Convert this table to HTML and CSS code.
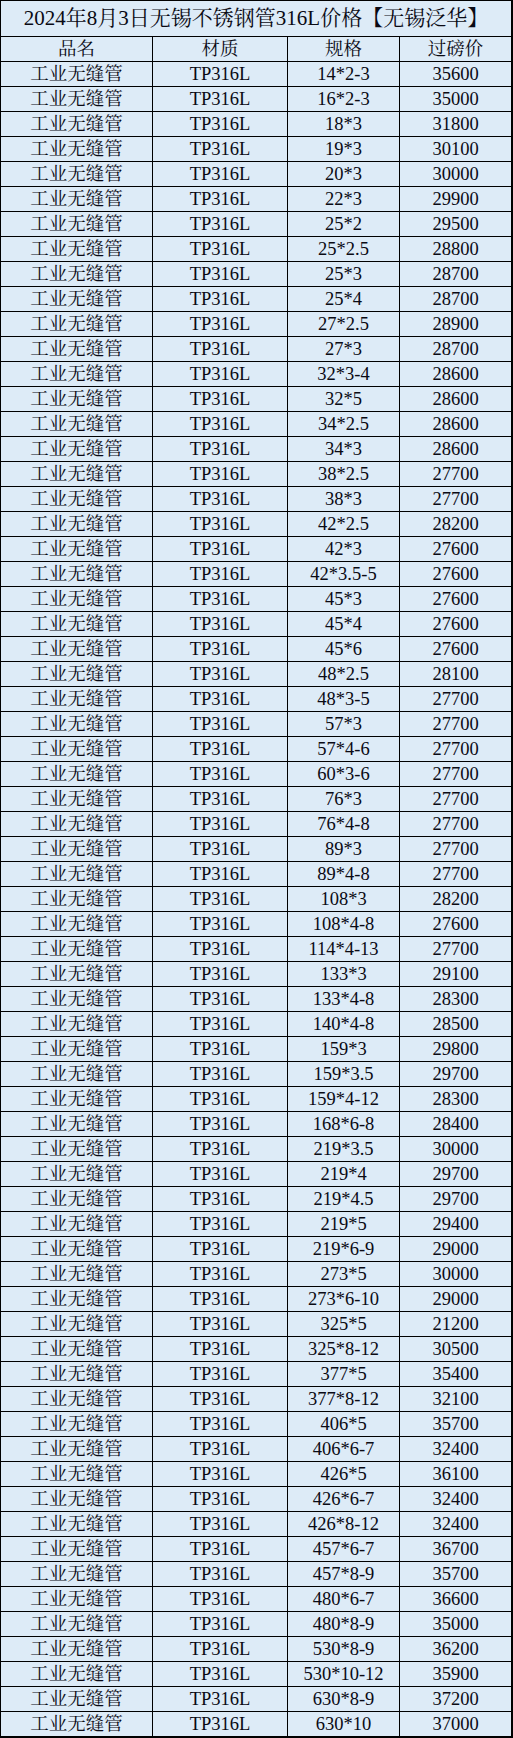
FILE: index.html
```html
<!DOCTYPE html>
<html lang="zh-CN">
<head>
<meta charset="utf-8">
<title>2024年8月3日无锡不锈钢管316L价格</title>
<link rel="stylesheet" href="styles.css">
</head>
<body>
<div class="sheet">
<div class="cell title">2024年8月3日无锡不锈钢管316L价格【无锡泛华】</div>
<div class="cell head">品名</div><div class="cell head">材质</div><div class="cell head">规格</div><div class="cell head">过磅价</div>
<div class="cell">工业无缝管</div><div class="cell">TP316L</div><div class="cell">14*2-3</div><div class="cell">35600</div>
<div class="cell">工业无缝管</div><div class="cell">TP316L</div><div class="cell">16*2-3</div><div class="cell">35000</div>
<div class="cell">工业无缝管</div><div class="cell">TP316L</div><div class="cell">18*3</div><div class="cell">31800</div>
<div class="cell">工业无缝管</div><div class="cell">TP316L</div><div class="cell">19*3</div><div class="cell">30100</div>
<div class="cell">工业无缝管</div><div class="cell">TP316L</div><div class="cell">20*3</div><div class="cell">30000</div>
<div class="cell">工业无缝管</div><div class="cell">TP316L</div><div class="cell">22*3</div><div class="cell">29900</div>
<div class="cell">工业无缝管</div><div class="cell">TP316L</div><div class="cell">25*2</div><div class="cell">29500</div>
<div class="cell">工业无缝管</div><div class="cell">TP316L</div><div class="cell">25*2.5</div><div class="cell">28800</div>
<div class="cell">工业无缝管</div><div class="cell">TP316L</div><div class="cell">25*3</div><div class="cell">28700</div>
<div class="cell">工业无缝管</div><div class="cell">TP316L</div><div class="cell">25*4</div><div class="cell">28700</div>
<div class="cell">工业无缝管</div><div class="cell">TP316L</div><div class="cell">27*2.5</div><div class="cell">28900</div>
<div class="cell">工业无缝管</div><div class="cell">TP316L</div><div class="cell">27*3</div><div class="cell">28700</div>
<div class="cell">工业无缝管</div><div class="cell">TP316L</div><div class="cell">32*3-4</div><div class="cell">28600</div>
<div class="cell">工业无缝管</div><div class="cell">TP316L</div><div class="cell">32*5</div><div class="cell">28600</div>
<div class="cell">工业无缝管</div><div class="cell">TP316L</div><div class="cell">34*2.5</div><div class="cell">28600</div>
<div class="cell">工业无缝管</div><div class="cell">TP316L</div><div class="cell">34*3</div><div class="cell">28600</div>
<div class="cell">工业无缝管</div><div class="cell">TP316L</div><div class="cell">38*2.5</div><div class="cell">27700</div>
<div class="cell">工业无缝管</div><div class="cell">TP316L</div><div class="cell">38*3</div><div class="cell">27700</div>
<div class="cell">工业无缝管</div><div class="cell">TP316L</div><div class="cell">42*2.5</div><div class="cell">28200</div>
<div class="cell">工业无缝管</div><div class="cell">TP316L</div><div class="cell">42*3</div><div class="cell">27600</div>
<div class="cell">工业无缝管</div><div class="cell">TP316L</div><div class="cell">42*3.5-5</div><div class="cell">27600</div>
<div class="cell">工业无缝管</div><div class="cell">TP316L</div><div class="cell">45*3</div><div class="cell">27600</div>
<div class="cell">工业无缝管</div><div class="cell">TP316L</div><div class="cell">45*4</div><div class="cell">27600</div>
<div class="cell">工业无缝管</div><div class="cell">TP316L</div><div class="cell">45*6</div><div class="cell">27600</div>
<div class="cell">工业无缝管</div><div class="cell">TP316L</div><div class="cell">48*2.5</div><div class="cell">28100</div>
<div class="cell">工业无缝管</div><div class="cell">TP316L</div><div class="cell">48*3-5</div><div class="cell">27700</div>
<div class="cell">工业无缝管</div><div class="cell">TP316L</div><div class="cell">57*3</div><div class="cell">27700</div>
<div class="cell">工业无缝管</div><div class="cell">TP316L</div><div class="cell">57*4-6</div><div class="cell">27700</div>
<div class="cell">工业无缝管</div><div class="cell">TP316L</div><div class="cell">60*3-6</div><div class="cell">27700</div>
<div class="cell">工业无缝管</div><div class="cell">TP316L</div><div class="cell">76*3</div><div class="cell">27700</div>
<div class="cell">工业无缝管</div><div class="cell">TP316L</div><div class="cell">76*4-8</div><div class="cell">27700</div>
<div class="cell">工业无缝管</div><div class="cell">TP316L</div><div class="cell">89*3</div><div class="cell">27700</div>
<div class="cell">工业无缝管</div><div class="cell">TP316L</div><div class="cell">89*4-8</div><div class="cell">27700</div>
<div class="cell">工业无缝管</div><div class="cell">TP316L</div><div class="cell">108*3</div><div class="cell">28200</div>
<div class="cell">工业无缝管</div><div class="cell">TP316L</div><div class="cell">108*4-8</div><div class="cell">27600</div>
<div class="cell">工业无缝管</div><div class="cell">TP316L</div><div class="cell">114*4-13</div><div class="cell">27700</div>
<div class="cell">工业无缝管</div><div class="cell">TP316L</div><div class="cell">133*3</div><div class="cell">29100</div>
<div class="cell">工业无缝管</div><div class="cell">TP316L</div><div class="cell">133*4-8</div><div class="cell">28300</div>
<div class="cell">工业无缝管</div><div class="cell">TP316L</div><div class="cell">140*4-8</div><div class="cell">28500</div>
<div class="cell">工业无缝管</div><div class="cell">TP316L</div><div class="cell">159*3</div><div class="cell">29800</div>
<div class="cell">工业无缝管</div><div class="cell">TP316L</div><div class="cell">159*3.5</div><div class="cell">29700</div>
<div class="cell">工业无缝管</div><div class="cell">TP316L</div><div class="cell">159*4-12</div><div class="cell">28300</div>
<div class="cell">工业无缝管</div><div class="cell">TP316L</div><div class="cell">168*6-8</div><div class="cell">28400</div>
<div class="cell">工业无缝管</div><div class="cell">TP316L</div><div class="cell">219*3.5</div><div class="cell">30000</div>
<div class="cell">工业无缝管</div><div class="cell">TP316L</div><div class="cell">219*4</div><div class="cell">29700</div>
<div class="cell">工业无缝管</div><div class="cell">TP316L</div><div class="cell">219*4.5</div><div class="cell">29700</div>
<div class="cell">工业无缝管</div><div class="cell">TP316L</div><div class="cell">219*5</div><div class="cell">29400</div>
<div class="cell">工业无缝管</div><div class="cell">TP316L</div><div class="cell">219*6-9</div><div class="cell">29000</div>
<div class="cell">工业无缝管</div><div class="cell">TP316L</div><div class="cell">273*5</div><div class="cell">30000</div>
<div class="cell">工业无缝管</div><div class="cell">TP316L</div><div class="cell">273*6-10</div><div class="cell">29000</div>
<div class="cell">工业无缝管</div><div class="cell">TP316L</div><div class="cell">325*5</div><div class="cell">21200</div>
<div class="cell">工业无缝管</div><div class="cell">TP316L</div><div class="cell">325*8-12</div><div class="cell">30500</div>
<div class="cell">工业无缝管</div><div class="cell">TP316L</div><div class="cell">377*5</div><div class="cell">35400</div>
<div class="cell">工业无缝管</div><div class="cell">TP316L</div><div class="cell">377*8-12</div><div class="cell">32100</div>
<div class="cell">工业无缝管</div><div class="cell">TP316L</div><div class="cell">406*5</div><div class="cell">35700</div>
<div class="cell">工业无缝管</div><div class="cell">TP316L</div><div class="cell">406*6-7</div><div class="cell">32400</div>
<div class="cell">工业无缝管</div><div class="cell">TP316L</div><div class="cell">426*5</div><div class="cell">36100</div>
<div class="cell">工业无缝管</div><div class="cell">TP316L</div><div class="cell">426*6-7</div><div class="cell">32400</div>
<div class="cell">工业无缝管</div><div class="cell">TP316L</div><div class="cell">426*8-12</div><div class="cell">32400</div>
<div class="cell">工业无缝管</div><div class="cell">TP316L</div><div class="cell">457*6-7</div><div class="cell">36700</div>
<div class="cell">工业无缝管</div><div class="cell">TP316L</div><div class="cell">457*8-9</div><div class="cell">35700</div>
<div class="cell">工业无缝管</div><div class="cell">TP316L</div><div class="cell">480*6-7</div><div class="cell">36600</div>
<div class="cell">工业无缝管</div><div class="cell">TP316L</div><div class="cell">480*8-9</div><div class="cell">35000</div>
<div class="cell">工业无缝管</div><div class="cell">TP316L</div><div class="cell">530*8-9</div><div class="cell">36200</div>
<div class="cell">工业无缝管</div><div class="cell">TP316L</div><div class="cell">530*10-12</div><div class="cell">35900</div>
<div class="cell">工业无缝管</div><div class="cell">TP316L</div><div class="cell">630*8-9</div><div class="cell">37200</div>
<div class="cell">工业无缝管</div><div class="cell">TP316L</div><div class="cell">630*10</div><div class="cell">37000</div>
</div>
</body>
</html>
```
FILE: styles.css
```css
html, body {
  margin: 0;
  padding: 0;
  background: #ffffff;
}

.sheet {
  display: grid;
  grid-template-columns: 151px 134px 111px 111px;
  grid-template-rows: 35px;
  grid-auto-rows: 24px;
  gap: 1px;
  padding: 1px 2px 2px 1px;
  width: 513px;
  box-sizing: border-box;
  background: #000000;
  font-family: "Liberation Serif", "Noto Serif CJK SC", "Noto Sans CJK SC", serif;
  color: #0a0a14;
}

.cell {
  background: #ddebf7;
  display: flex;
  align-items: center;
  justify-content: center;
  font-size: 18.5px;
  line-height: 1;
  white-space: nowrap;
  overflow: hidden;
}

.title {
  grid-column: 1 / -1;
  font-size: 21px;
}
```
